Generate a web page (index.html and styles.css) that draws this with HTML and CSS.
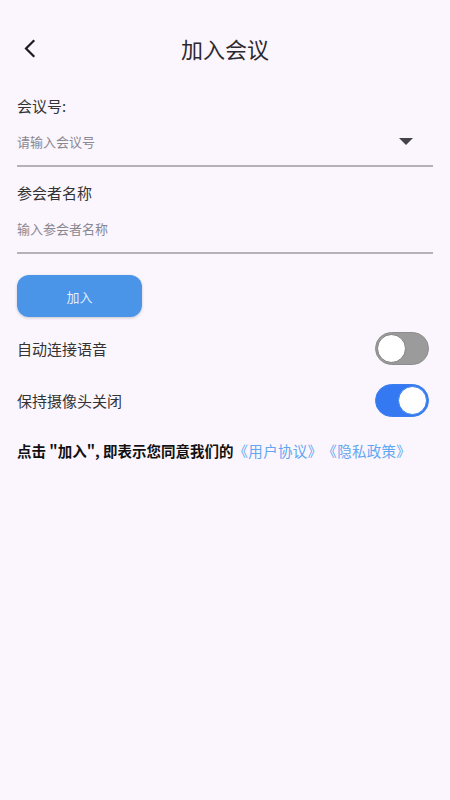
FILE: index.html
```html
<!DOCTYPE html>
<html lang="zh-CN">
<head>
    <meta charset="UTF-8">
    <meta name="viewport" content="width=device-width, initial-scale=1.0">
    <title>加入会议</title>
    <link rel="stylesheet" href="styles.css">
</head>
<body>
    <header class="app-bar">
        <button class="back" aria-label="返回">
            <svg width="24" height="24" viewBox="0 0 24 24"><path d="M16.5 5 L9 12.5 L16.5 20" fill="none" stroke="#1d1b20" stroke-width="2.2" stroke-linecap="square"/></svg>
        </button>
        <h1 class="title">加入会议</h1>
        <span></span>
    </header>

    <main class="form">
        <label class="label">会议号:</label>
        <div class="field">
            <span class="placeholder">请输入会议号</span>
            <span class="caret"></span>
        </div>

        <label class="label second">参会者名称</label>
        <div class="field">
            <span class="placeholder">输入参会者名称</span>
        </div>

        <button class="join">加入</button>

        <div class="row">
            <span class="row-text">自动连接语音</span>
            <span class="switch"><span class="knob"></span></span>
        </div>
        <div class="row">
            <span class="row-text">保持摄像头关闭</span>
            <span class="switch on"><span class="knob"></span></span>
        </div>

        <p class="terms"><b>点击 "加入", 即表示您同意我们的</b><a>《用户协议》</a><a>《隐私政策》</a></p>
    </main>
</body>
</html>
```

FILE: styles.css
```css
body { margin: 0; background-color: #fbf6fd; font-family: "Noto Sans CJK SC", "Noto Sans", sans-serif; color: #1d1b20; }

.app-bar { display: grid; grid-template-columns: 1fr auto 1fr; align-items: center; height: 56px; margin-top: 20px; padding: 0 17px; }
.back { justify-self: start; display: flex; padding: 0; border: none; background: none; }
.title { margin: 0; font-size: 22px; font-weight: 400; line-height: 28px; color: #2b2930; }

.form { padding: 0 17px; }
.label { display: block; margin-top: 20px; font-size: 15px; line-height: 20px; color: #333; }
.label.second { margin-top: 16px; }
.field { display: flex; align-items: center; justify-content: space-between; height: 41px; margin-top: 5px; padding: 0 20px 3px 0; border-bottom: 2px solid #b5b1b9; }
.placeholder { font-size: 13px; color: #8a8790; }
.caret { width: 0; height: 0; border-left: 7px solid transparent; border-right: 7px solid transparent; border-top: 7px solid #45434a; }

.join { display: block; width: 125px; height: 42px; margin-top: 21px; border: none; border-radius: 12px; background-color: #4b95e9; color: rgba(255, 255, 255, 0.85); font-family: inherit; font-size: 13px; box-shadow: 0 1px 3px rgba(0, 0, 0, 0.2); }

.row { display: flex; align-items: center; justify-content: space-between; height: 52px; padding-right: 4px; }
.join + .row { margin-top: 5px; }
.row-text { font-size: 15px; color: #333; }
.switch { display: flex; align-items: center; box-sizing: border-box; width: 54px; height: 33px; padding: 1px; border-radius: 17px; background-color: #9b9b9b; border: 1px solid #8d8d8d; }
.switch.on { justify-content: flex-end; background-color: #3479f1; border-color: #3a7ff0; }
.knob { box-sizing: border-box; width: 29px; height: 29px; border-radius: 50%; background-color: #fff; border: 1px solid #7c7c7c; }
.switch.on .knob { border-color: #3a7ff0; }

.terms { margin: 15px 0 0; font-size: 14.5px; line-height: 20px; text-spacing-trim: space-all; }
.terms b { color: #111; }
.terms a { color: #62a6f2; letter-spacing: 0.3px; }
```
